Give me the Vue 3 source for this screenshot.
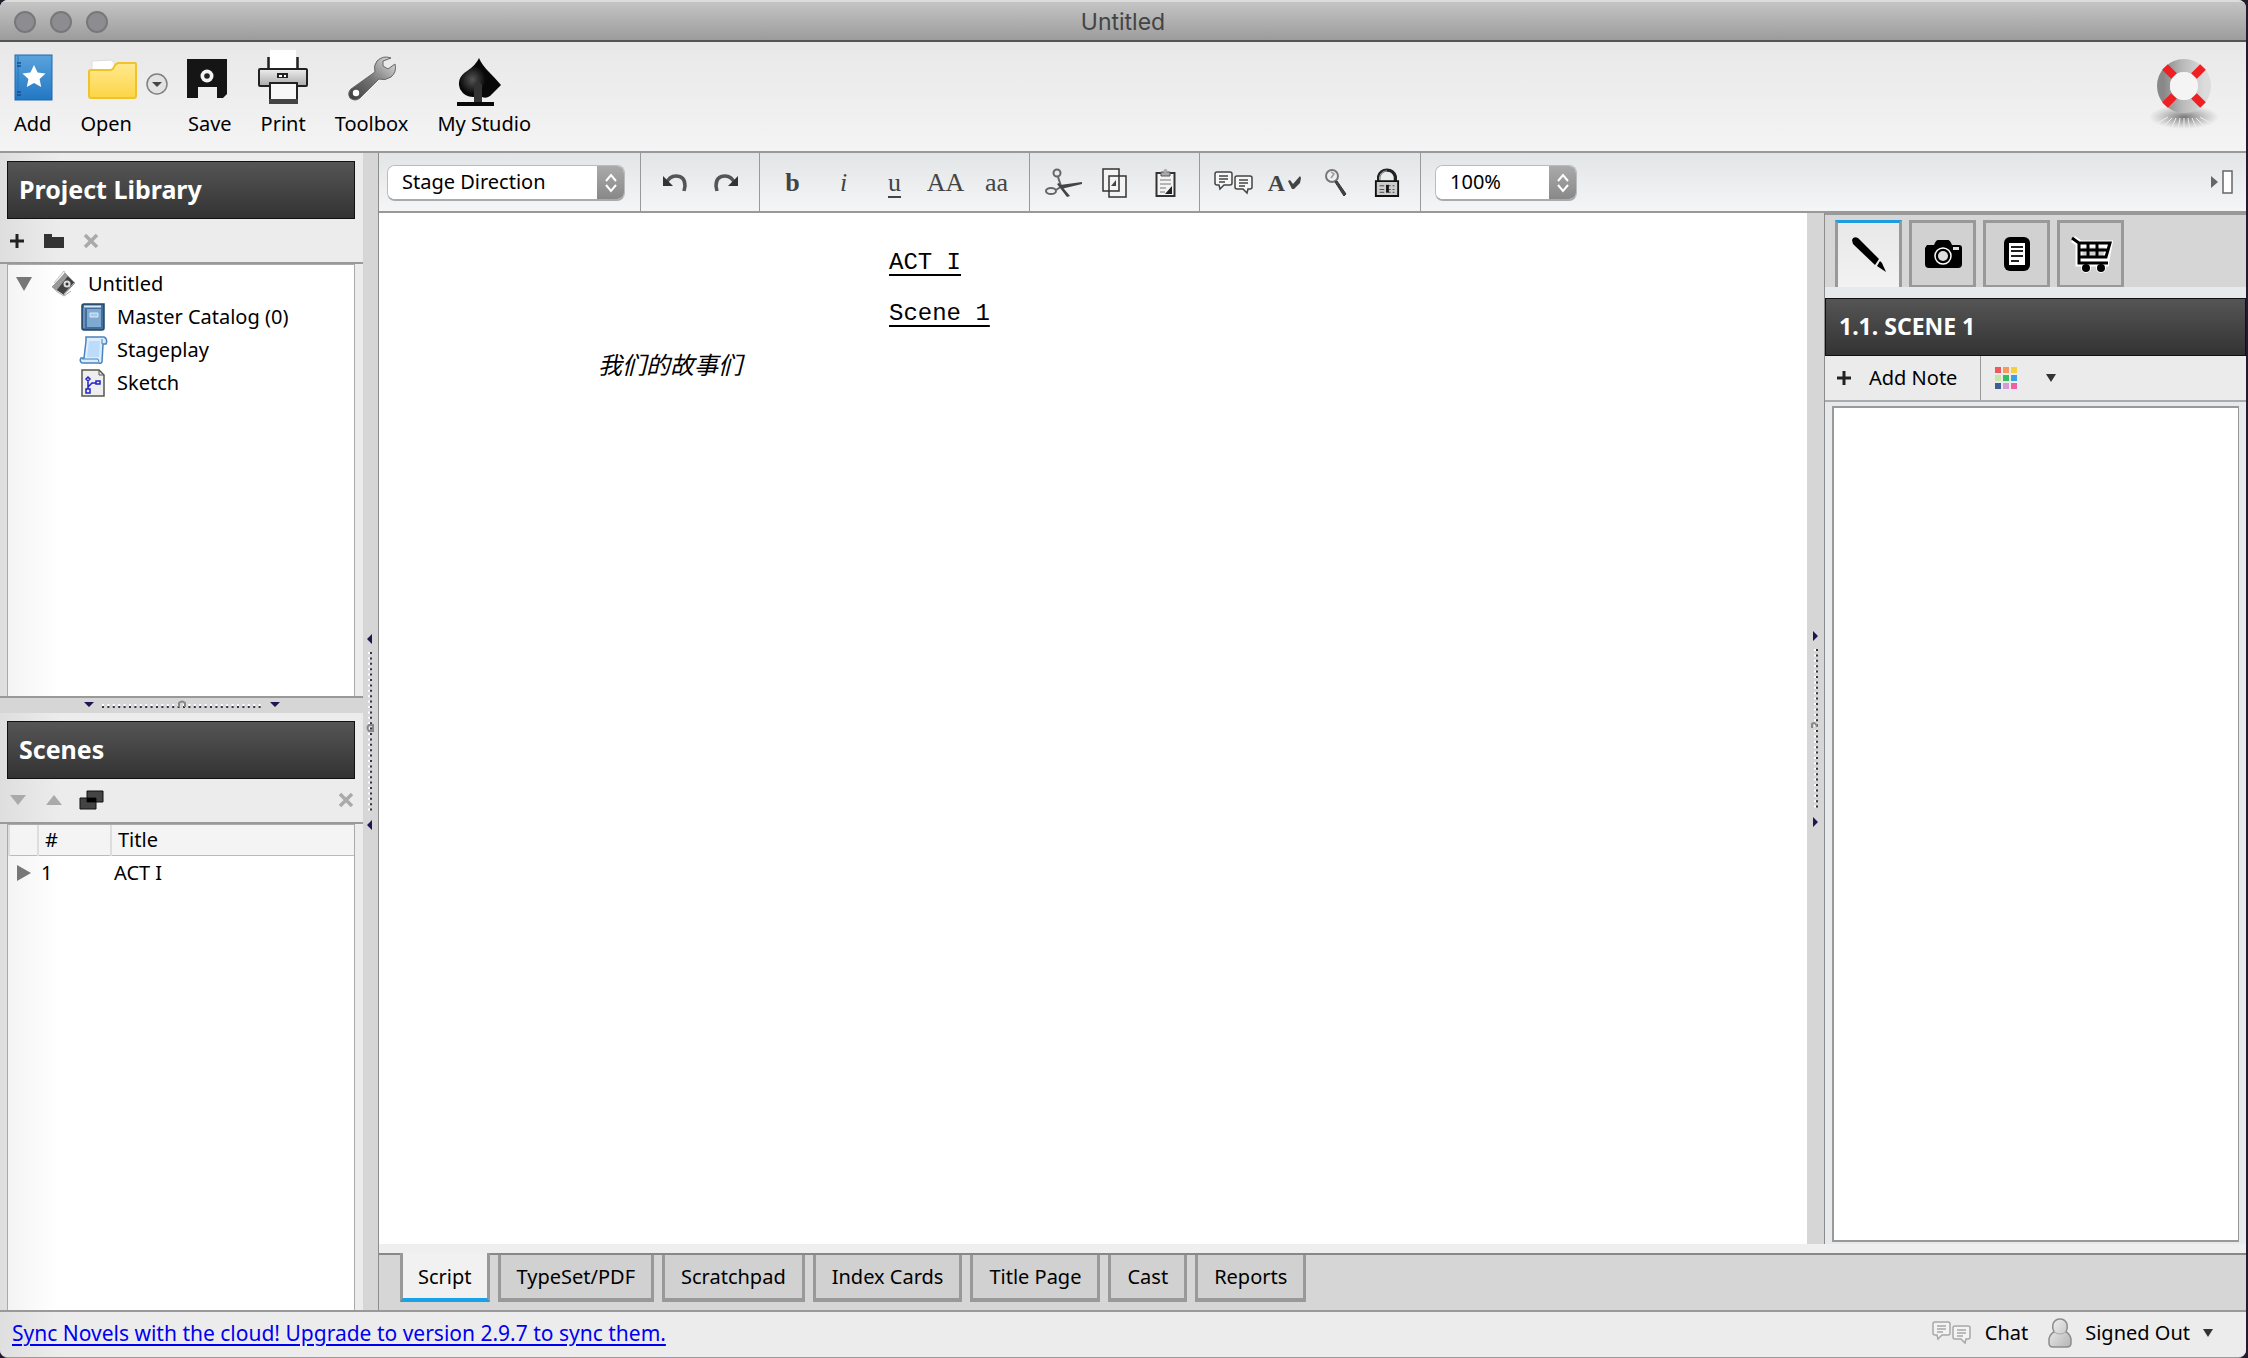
<script setup>
import { ref } from 'vue'

const element = ref('Stage Direction')
const zoom = ref('100%')
const activeTab = ref('Script')
const notes = ref('')

const tabs = ['Script', 'TypeSet/PDF', 'Scratchpad', 'Index Cards', 'Title Page', 'Cast', 'Reports']

const swatches = [
  '#f0595c', '#f59a5b', '#f6cf3f',
  '#c3e8a8', '#36bd5c', '#3a9fe3',
  '#3f5f95', '#d79ad8', '#ee62a5'
]
</script>

<template>
  <div class="window">
    <header class="titlebar">
      <div class="lights"><i></i><i></i><i></i></div>
      <h1>Untitled</h1>
    </header>

    <nav class="toolbar" aria-label="Main">
      <button class="tool">
        <svg viewBox="0 0 56 56" width="56" height="56">
          <defs><linearGradient id="gAdd" x2="0" y2="1"><stop offset="0" stop-color="#5aa3dc" /><stop offset="1" stop-color="#2277c4" /></linearGradient></defs>
          <rect x="10" y="4" width="37" height="45" fill="url(#gAdd)" stroke="#1c69b2" />
          <path d="M13 5v43" stroke="#2a72b8" /><path d="M12 12h4M12 15h4M12 41h4M12 44h4" stroke="#1a4f87" stroke-width="1.500" />
          <path d="M29 14l3.600 7.400 8 1-6 5.600 1.600 8-7.200-4-7.200 4 1.600-8-6-5.600 8-1z" fill="#fff" />
        </svg>
        <span>Add</span>
      </button>
      <div class="open-group">
        <button class="tool">
          <svg viewBox="0 0 56 56" width="56" height="56">
            <defs><linearGradient id="gOpen" x2="0" y2="1"><stop offset="0" stop-color="#ffe98f" /><stop offset="1" stop-color="#fcd545" /></linearGradient></defs>
            <path d="M14 24V10l20-1 5 8z" fill="#fff" stroke="#ddd" />
            <path d="M13 19h19q3 0 4-3t4-4h17q1 0 1 1v32q0 2-2 2H13q-2 0-2-2V21q0-2 2-2z" fill="url(#gOpen)" stroke="#f0c22c" stroke-width="2" />
          </svg>
          <span>Open</span>
        </button>
        <button class="more" aria-label="Open recent">
          <svg viewBox="0 0 22 22" width="22" height="22">
            <circle cx="11" cy="11" r="10" fill="#e2e2e2" stroke="#808080" stroke-width="1.500" /><path d="M6 9h10l-5 5z" fill="#444" />
          </svg>
        </button>
      </div>
      <button class="tool">
        <svg viewBox="0 0 56 56" width="56" height="56">
          <path d="M5 8h40v35l-4 4H5z" fill="#151515" />
          <circle cx="25" cy="25" r="6.500" fill="#f4f4f4" /><circle cx="25" cy="25" r="2.800" fill="#222" />
          <path d="M16 36h19v11H16z" fill="#eee" />
        </svg>
        <span>Save</span>
      </button>
      <button class="tool">
        <svg viewBox="0 0 56 56" width="56" height="56">
          <defs><linearGradient id="gPrint" x2="0" y2="1"><stop offset="0" stop-color="#eee" /><stop offset="1" stop-color="#aaa" /></linearGradient></defs>
          <path d="M15-1h26v20H15z" fill="#fff" /><path d="M13.500 6v13M42.500 6v13" stroke="#222" stroke-width="2.500" />
          <rect x="4" y="18" width="48" height="17" rx="1" fill="url(#gPrint)" stroke="#222" stroke-width="2" />
          <path d="M22 22h11v5H22z" fill="#222" /><path d="M24 24h3v2h-3zM29 24h2v2h-2z" fill="#fff" />
          <path d="M15 32h27v19H15z" fill="#f7f7f7" stroke="#222" stroke-width="2" /><path d="M14 48h29v5H14z" fill="#444" />
        </svg>
        <span>Print</span>
      </button>
      <button class="tool">
        <svg viewBox="0 0 56 56" width="56" height="56">
          <defs><linearGradient id="gWrench" x1="0" y1="1" x2="1" y2="0"><stop offset="0" stop-color="#3c3c3c" /><stop offset=".5" stop-color="#777" /><stop offset="1" stop-color="#e6e6e6" /></linearGradient></defs>
          <path d="M47 7q-8-3-14 3-4 5-2 11L7 38q-4 4-1 9 5 4 10 0l19-19q6 2 12-2 6-5 4-13l-7 5-5-3v-5z" fill="url(#gWrench)" stroke="#666" />
          <circle cx="12" cy="42" r="3.200" fill="#fff" />
        </svg>
        <span>Toolbox</span>
      </button>
      <button class="tool">
        <svg viewBox="0 0 56 56" width="56" height="56">
          <defs><radialGradient id="gSpade" cx=".35" cy=".45"><stop offset="0" stop-color="#555" /><stop offset=".6" stop-color="#080808" /></radialGradient></defs>
          <path d="M23 7q3 7 10 14 6 6 12 13l-11 11q-4 3-8 1v5h12v4H1v-4h18v-5q-10 1-15-8-4-11 7-18 9-6 12-13z" fill="url(#gSpade)" />
          <path d="M18 34q4-7 8 0v17h-8z" fill="#333" />
        </svg>
        <span>My Studio</span>
      </button>
      <button class="help" aria-label="Help">
        <svg viewBox="0 0 70 76" width="70" height="76">
          <defs>
            <linearGradient id="gRing" x2="1" y2="0"><stop offset="0" stop-color="#888" /><stop offset=".45" stop-color="#b8b8b8" /><stop offset="1" stop-color="#dcdcdc" /></linearGradient>
            <radialGradient id="gShade"><stop offset="0" stop-color="#777" /><stop offset="1" stop-color="#999" stop-opacity="0" /></radialGradient>
          </defs>
          <ellipse cx="35" cy="61" rx="35" ry="12" fill="url(#gShade)" />
          <path d="M35 62v13M31 62l-2 12M39 62l2 12M27 62l-5 11M43 62l5 11M23 62l-9 9M47 62l9 9M19 61L7 68M51 61l12 7" stroke="#eee" />
          <circle cx="35" cy="30" r="20.500" fill="none" stroke="url(#gRing)" stroke-width="13" />
          <circle cx="35" cy="30" r="14" fill="#f4f4f4" />
          <g stroke="#f01f22" stroke-width="8"><path d="M16 11l9 9M54 11l-9 9M16 49l9-9M54 49l-9-9" /></g>
        </svg>
      </button>
    </nav>

    <div class="workspace">
      <aside class="left">
        <section class="library">
          <h2 class="dark">Project Library</h2>
          <div class="mini">
            <button aria-label="Add item"><svg viewBox="0 0 14 14" width="14" height="14"><path d="M7 0v14M0 7h14" stroke="#222" stroke-width="3" /></svg></button>
            <button aria-label="New folder"><svg viewBox="0 0 20 14" width="20" height="14"><path d="M0 0h8v3h12v11H0z" fill="#333" /></svg></button>
            <button aria-label="Remove item"><svg viewBox="0 0 14 14" width="14" height="14"><path d="M1 1l12 12M13 1L1 13" stroke="#aaa" stroke-width="3.500" /></svg></button>
          </div>
          <ul class="tree">
            <li class="root">
              <svg viewBox="0 0 16 14" width="16" height="14"><path d="M0 0h16L8 14z" fill="#777" /></svg>
              <svg class="project" viewBox="0 0 24 26" width="24" height="26"><path d="M0 16L13 2l10 10-11 12z" fill="#444" /><path d="M0 16L13 2l3 3L4 20z" fill="#999" /><path d="M2 12L12 0l1 2M22 12l-10 11" stroke="#bbb" fill="none" /><circle cx="15" cy="13" r="3.500" fill="#ddd" /><circle cx="15" cy="13" r="1.500" fill="#333" /><path d="M4 20l8 5 7-5" stroke="#aaa" fill="none" /></svg>
              <span>Untitled</span>
            </li>
            <li>
              <svg viewBox="0 0 24 28" width="24" height="28"><path d="M1 3q0-2 2-2h20v24q0 2-2 2H3q-2 0-2-2z" fill="#426f9d" stroke="#234667" stroke-width="1.500" /><path d="M3 3.500h17" stroke="#dce9f5" stroke-width="2" /><path d="M6 6h14v18H6z" fill="#7fa9d1" /><path d="M3 5v20" stroke="#8fb4d8" /><path d="M9 10h8v4H9z" fill="#a8c8e6" stroke="#dcebf8" /></svg>
              <span>Master Catalog (0)</span>
            </li>
            <li>
              <svg viewBox="0 0 24 28" width="24" height="28"><path d="M5 1h18q4 2 2 7h-3l-1 18q-1 2-3 1H1q-3-2-1-5h3L5 5z" fill="#dcedff" stroke="#4a83bd" stroke-width="1.500" /><path d="M8 5h11l-1 16H6z" fill="#bcdcfb" /><path d="M1 23h16l1 3M21 8V3" stroke="#4a83bd" fill="none" /></svg>
              <span>Stageplay</span>
            </li>
            <li>
              <svg viewBox="0 0 24 28" width="24" height="28"><path d="M1 1h17l5 5v21H1z" fill="#eee" stroke="#555a4c" stroke-width="1.500" /><path d="M18 1v5h5" fill="none" stroke="#555a4c" /><path d="M7 8l2 2-2 2-2-2zM5 20h4v4H5zM15 12h4v3h-4zM7 12v8M7 18l4-4h4" fill="none" stroke="#2222c8" stroke-width="1.500" /></svg>
              <span>Sketch</span>
            </li>
          </ul>
        </section>

        <div class="split-h">
          <svg viewBox="0 0 196 10" width="196" height="10">
            <path d="M0 2h10L5 7zM186 2h10l-5 5z" fill="#1d1650" />
            <path d="M18 5h162" stroke="#fff" stroke-width="2" stroke-dasharray="2 3.4" /><path d="M18 7h162" stroke="#334" stroke-width="2" stroke-dasharray="2 3.4" />
            <path d="M95 7V3q3-3 6 0v4" fill="none" stroke="#888" stroke-width="2" />
          </svg>
        </div>

        <section class="scenes">
          <h2 class="dark">Scenes</h2>
          <div class="mini">
            <button aria-label="Move down"><svg viewBox="0 0 16 10" width="16" height="10"><path d="M0 0h16l-8 10z" fill="#aaa" /></svg></button>
            <button aria-label="Move up"><svg viewBox="0 0 16 10" width="16" height="10"><path d="M0 10h16L8 0z" fill="#aaa" /></svg></button>
            <button aria-label="Group scenes"><svg viewBox="0 0 20 20" width="20" height="20"><path d="M5 1h16v11H5zM-2 8h16v11H-2z" fill="#444" stroke="#111" /><path d="M5 8h9v4H5z" fill="#000" /></svg></button>
            <button class="end" aria-label="Remove scene"><svg viewBox="0 0 14 14" width="14" height="14"><path d="M1 1l12 12M13 1L1 13" stroke="#aaa" stroke-width="3.500" /></svg></button>
          </div>
          <div class="table-box">
            <table>
              <thead><tr><th class="c-arrow"></th><th class="c-num">#</th><th>Title</th></tr></thead>
              <tbody><tr><td class="c-arrow"><svg viewBox="0 0 14 16" width="14" height="16"><path d="M0 0v16l14-8z" fill="#777" /></svg></td><td>1</td><td>ACT I</td></tr></tbody>
            </table>
          </div>
        </section>
      </aside>

      <div class="split-v first">
        <svg viewBox="0 0 10 196" width="10" height="196">
          <path d="M7 0v10L2 5zM7 186v10l-5-5z" fill="#1d1650" />
          <path d="M4 18v162" stroke="#fff" stroke-width="2" stroke-dasharray="2 3.4" /><path d="M6 18v162" stroke="#334" stroke-width="2" stroke-dasharray="2 3.4" />
          <path d="M8 91H4q-3 3 0 6h4z" fill="none" stroke="#888" stroke-width="2" />
        </svg>
      </div>

      <div class="center">
        <div class="format">
          <div class="group pick">
            <label class="combo wide"><select v-model="element" aria-label="Element type"><option>Stage Direction</option></select>
              <i><svg viewBox="0 0 12 20" width="12" height="20"><path d="M1 8l5-6 5 6M1 12l5 6 5-6" fill="none" stroke="#fff" stroke-width="2" /></svg></i></label>
          </div>
          <div class="group">
            <button aria-label="Undo"><svg viewBox="0 0 26 20" width="26" height="20"><path d="M4 11Q7 3 14 3q9 0 9 10l-1 5" fill="none" stroke="#555" stroke-width="3.500" /><path d="M1 3v10h10z" fill="#333" /></svg></button>
            <button aria-label="Redo"><svg viewBox="0 0 26 20" width="26" height="20"><path d="M22 11Q19 3 12 3q-9 0-9 10l1 5" fill="none" stroke="#555" stroke-width="3.500" /><path d="M25 3v10H15z" fill="#333" /></svg></button>
          </div>
          <div class="group letters">
            <button class="b">b</button><button class="it">i</button><button class="u">u</button><button>AA</button><button>aa</button>
          </div>
          <div class="group">
            <button aria-label="Cut"><svg viewBox="0 0 38 30" width="38" height="30"><g fill="none" stroke="#666" stroke-width="2"><circle cx="12" cy="5" r="3.500" /><ellipse cx="6" cy="23" rx="5" ry="3" /><path d="M13 9l3 9M11 22l6-4" /></g><path d="M15 17l22-3v2l-21 5zM14 15l11 13-3 1-10-13z" fill="#444" /></svg></button>
            <button aria-label="Copy"><svg viewBox="0 0 26 30" width="26" height="30"><path d="M1 1h16v22H1zM7 8h17v21H7z" fill="#f4f4f4" stroke="#333" stroke-width="1.500" /><path d="M14 12v6h-5z" fill="#444" /></svg></button>
            <button aria-label="Paste"><svg viewBox="0 0 22 30" width="22" height="30"><path d="M1.500 5h18v23h-18z" fill="#f4f4f4" stroke="#333" stroke-width="2" /><path d="M6 4h9v4H6z" fill="#aaa" stroke="#555" /><circle cx="10.500" cy="3" r="2" fill="#aaa" /><path d="M5 12h11M5 16h11M5 20h6M5 24h5" stroke="#777" /><path d="M17 18v8h-7z" fill="#222" /></svg></button>
          </div>
          <div class="group">
            <button aria-label="Comments"><svg viewBox="0 0 40 26" width="40" height="26"><g fill="#f6f6f6" stroke="#444" stroke-width="1.500"><path d="M3 2h13q2 0 2 2v9q0 2-2 2h-6l-4 4-1-4H3q-2 0-2-2V4q0-2 2-2z" /><path d="M23 6h13q2 0 2 2v9q0 2-2 2h-2l-1 4-4-4h-6q-2 0-2-2V8q0-2 2-2z" /><path d="M5 6h9M5 9h9M5 12h6M25 10h9M25 13h9M25 16h6" /></g></svg></button>
            <button class="spell" aria-label="Spelling">A<svg viewBox="0 0 13 14" width="13" height="14"><path d="M0 5l2-1 3 4 7-8 1 2-1 5-6 6H4z" fill="#444" /></svg></button>
            <button aria-label="Find"><svg viewBox="0 0 24 30" width="24" height="30"><circle cx="8" cy="8" r="6" fill="#eee" stroke="#777" stroke-width="2" /><path d="M7 4l3 2-3 4" fill="none" stroke="#999" stroke-width="1.500" /><path d="M11 14l2-1 9 13-2 2z" fill="#444" stroke="#333" /></svg></button>
            <button aria-label="Lock"><svg viewBox="0 0 28 32" width="26" height="30"><path d="M5 15V9q2-7 9-7t9 7v6" fill="none" stroke="#222" stroke-width="3.500" /><path d="M6 14V9q2-6 8-6" fill="none" stroke="#bbb" /><path d="M2 14h24v16H2z" fill="#ccc" stroke="#111" stroke-width="2" /><path d="M6 19h16M6 23h16M6 26h16" stroke="#444" stroke-dasharray="5 2" /><path d="M13 18h3v8h-3z" fill="#111" /></svg></button>
          </div>
          <div class="group pick last">
            <label class="combo"><select v-model="zoom" aria-label="Zoom"><option>100%</option></select>
              <i><svg viewBox="0 0 12 20" width="12" height="20"><path d="M1 8l5-6 5 6M1 12l5 6 5-6" fill="none" stroke="#fff" stroke-width="2" /></svg></i></label>
          </div>
          <button class="toggle" aria-label="Toggle side panel"><svg viewBox="0 0 24 24" width="24" height="24"><path d="M1 6v12l7-6z" fill="#666" /><path d="M13 1h9v22h-9z" fill="#fff" stroke="#666" stroke-width="1.500" /></svg></button>
        </div>

        <div class="stage">
          <main class="script">
            <p class="heading">ACT I</p>
            <p class="heading">Scene 1</p>
            <p class="direction">我们的故事们</p>
          </main>

          <div class="split-v second">
            <svg viewBox="0 0 10 196" width="10" height="196">
              <path d="M3 0v10l5-5zM3 186v10l5-5z" fill="#1d1650" />
              <path d="M5 18v162" stroke="#fff" stroke-width="2" stroke-dasharray="2 3.4" /><path d="M7 18v162" stroke="#334" stroke-width="2" stroke-dasharray="2 3.4" />
              <path d="M2 97v-4q3-3 5 3" fill="none" stroke="#888" stroke-width="2" />
            </svg>
          </div>

          <aside class="inspector">
            <div class="itabs">
              <button class="on" aria-label="Notes"><svg viewBox="0 0 36 36" width="36" height="36"><path d="M1 3q1-4 6-2l21 21-4 6L2 7z" fill="#000" /><path d="M26 29l3-5 2 2 4 9z" fill="#000" /></svg></button>
              <button aria-label="Media"><svg viewBox="0 0 38 30" width="38" height="30"><path d="M3 6h7q2-5 4-5h10q2 0 4 5h7q3 0 3 3v16q0 4-4 4H5q-4 0-4-4V9z" fill="#000" /><circle cx="19" cy="17" r="8" fill="none" stroke="#fff" stroke-width="1.500" /><circle cx="19" cy="17" r="5" fill="#ddd" /><path d="M29 8h6v3h-6z" fill="#ddd" /></svg></button>
              <button aria-label="Document"><svg viewBox="0 0 28 36" width="28" height="36"><rect x="1" y="1" width="26" height="34" rx="6" fill="#000" /><path d="M6 7h16v22H6z" fill="#fff" /><path d="M8 11h12M8 15h12M8 20h12M8 25h8" stroke="#222" stroke-width="2" /></svg></button>
              <button aria-label="Store"><svg viewBox="0 0 42 38" width="42" height="38"><g fill="none" stroke="#fff" stroke-width="7"><path d="M3 4l6 4v20h30M9 9h30l-3 16H9" /></g><g fill="#fff"><circle cx="16" cy="33" r="5" /><circle cx="31" cy="33" r="5" /></g><g fill="none" stroke="#000" stroke-width="3"><path d="M2 3l7 5v20h29M9 8h31l-4 14H9M9 15h29M18 8v14M27 8v14" /></g><circle cx="16" cy="33" r="4" /><circle cx="31" cy="33" r="4" /></svg></button>
            </div>
            <h2 class="dark">1.1. SCENE 1</h2>
            <div class="notebar">
              <button class="add"><svg viewBox="0 0 14 14" width="14" height="14"><path d="M7 0v14M0 7h14" stroke="#222" stroke-width="3" /></svg><span>Add Note</span></button>
              <button class="palette" aria-label="Note colour">
                <span class="grid"><i v-for="c in swatches" :key="c" :style="{ background: c }"></i></span>
                <svg viewBox="0 0 10 8" width="10" height="8"><path d="M0 0h10L5 8z" fill="#333" /></svg>
              </button>
            </div>
            <textarea v-model="notes" aria-label="Note text"></textarea>
          </aside>
        </div>

        <nav class="tabs" aria-label="Views">
          <button v-for="t in tabs" :key="t" :class="{ on: t === activeTab }" @click="activeTab = t">{{ t }}</button>
        </nav>
      </div>
    </div>

    <footer>
      <a href="#">Sync Novels with the cloud! Upgrade to version 2.9.7 to sync them.</a>
      <div class="status">
        <button><svg viewBox="0 0 40 26" width="40" height="26"><g fill="#f3f3f3" stroke="#a8a8a8" stroke-width="1.500"><path d="M3 2h13q2 0 2 2v9q0 2-2 2h-6l-4 4-1-4H3q-2 0-2-2V4q0-2 2-2z" /><path d="M23 6h13q2 0 2 2v9q0 2-2 2h-2l-1 4-4-4h-6q-2 0-2-2V8q0-2 2-2z" /><path d="M5 6h9M5 9h9M5 12h6M25 10h9M25 13h9M25 16h6" /></g></svg><span>Chat</span></button>
        <button><svg viewBox="0 0 24 30" width="24" height="30"><defs><linearGradient id="gUser" x2="1" y2="1"><stop offset="0" stop-color="#f4f4f4" /><stop offset="1" stop-color="#b4b4b4" /></linearGradient></defs><path d="M5 29q-4 0-4-4v-4q1-5 5-7-2-4-1-8 2-5 7-5t7 5q1 4-1 8 4 2 5 7v4q0 4-4 4z" fill="url(#gUser)" stroke="#8c8c8c" stroke-width="1.500" /><path d="M6 14q6 4 12 0" fill="none" stroke="#aaa" /></svg><span>Signed Out</span><svg viewBox="0 0 10 8" width="10" height="8"><path d="M0 0h10L5 8z" fill="#333" /></svg></button>
      </div>
    </footer>
  </div>
</template>

<style>
body { margin: 0; background: #231a2c; }
</style>

<style scoped>
* { box-sizing: border-box; }
.window {
  height: 100vh;
  margin-right: 2px;
  display: flex;
  flex-direction: column;
  overflow: hidden;
  background: #ececec;
  border-bottom: 1px solid #9a9a9a;
  border-radius: 8px;
  font: 20px/24px "Noto Sans", "Open Sans", sans-serif;
  color: #000;
}
button { border: 0; padding: 0; background: none; font: inherit; color: inherit; }
svg { display: block; flex: none; overflow: visible; }
h1, h2, p, ul { margin: 0; padding: 0; }

.titlebar {
  flex: none;
  height: 42px;
  display: grid;
  grid-template-columns: 1fr auto 1fr;
  align-items: center;
  padding: 1px 14px 0;
  background: linear-gradient(#c4c4c4, #9c9c9c);
  border-top: 2px solid #dcdcdc;
  border-bottom: 2px solid #555;
}
.lights { display: flex; gap: 14px; }
.lights i { width: 22px; height: 22px; border-radius: 50%; background: #8d8d91; border: 2px solid #78787b; }
.titlebar h1 { font: 23px/28px Inter, sans-serif; color: #444; }

.toolbar {
  flex: none;
  height: 111px;
  display: flex;
  align-items: flex-start;
  gap: 29px;
  padding: 9px 27px 0 14px;
  background: linear-gradient(#e8e8e8, #f4f4f4);
  border-bottom: 2px solid #999;
}
.tool { display: flex; flex-direction: column; align-items: center; gap: 5px; }
.tool svg { margin: 0 -20px; }
.open-group { display: flex; gap: 14px; margin-right: -9px; }
.more { align-self: flex-start; padding-top: 22px; }
.help { margin-left: auto; padding-top: 5px; }

.workspace { flex: 1; min-height: 0; display: flex; }

.left { width: 363px; flex: none; display: flex; flex-direction: column; background: linear-gradient(90deg, #dedede, #ececec 60px); }
.library { flex: 544; display: flex; flex-direction: column; min-height: 0; padding-top: 8px; border-bottom: 2px solid #999; }
.scenes { flex: 599; display: flex; flex-direction: column; min-height: 0; padding-top: 8px; }
.dark {
  flex: none;
  height: 58px;
  margin: 0 8px 0 7px;
  padding-left: 11px;
  border: 1px solid #111;
  background: linear-gradient(#555, #333);
  color: #fff;
  font-size: 25px;
  line-height: 54px;
}
.mini { flex: none; height: 45px; display: flex; align-items: center; gap: 20px; padding: 0 10px; border-bottom: 2px solid #999; }
.mini .end { margin-left: auto; }
.tree { flex: 1; margin: 0 8px 0 7px; padding-top: 2px; border: 1px solid #aaa; border-width: 1px 1px 0; background: linear-gradient(90deg, #f4f4f4, #fff 50px); list-style: none; }
.tree li { height: 33px; display: flex; align-items: center; gap: 12px; padding-left: 73px; }
.tree .root { padding-left: 8px; }
.tree .project { margin-left: 8px; }

.split-h { flex: none; height: 15px; display: flex; align-items: center; justify-content: center; background: #d6d6d6; }
.split-v { flex: none; display: flex; align-items: center; background: #d6d6d6; border-right: 1px solid #8c8c8c; }
.split-v.first { width: 16px; padding-left: 2px; }
.split-v.second { width: 18px; padding-left: 3px; }

.table-box { flex: 1; margin: 0 8px 0 7px; border: 1px solid #aaa; border-bottom: 0; background: linear-gradient(90deg, #f4f4f4, #fff 50px); }
table { width: 100%; border-collapse: collapse; table-layout: fixed; }
th { height: 31px; padding: 0 0 0 6px; font-weight: 400; text-align: left; background: #f4f4f4; border-bottom: 1px solid #bbb; border-left: 2px solid #ddd; }
td { height: 34px; padding: 0 0 0 3px; }
.c-arrow { width: 29px; }
.c-num { width: 73px; }
td.c-arrow { padding-left: 8px; }

.center { flex: 1; min-width: 0; display: flex; flex-direction: column; background: #efefef; }
.format { flex: none; height: 60px; display: flex; background: linear-gradient(#e2e5e6, #f4f5f7); border-bottom: 2px solid #999; }
.group { display: flex; align-items: center; padding: 2px 8px 0; border-right: 1px solid #999; }
.group button { width: 51px; height: 40px; display: flex; align-items: center; justify-content: center; }
.group.letters { padding: 2px 7px 0; }
.letters button { font: 26px/30px "Liberation Serif", serif; color: #444; }
.letters .b { font-weight: 700; }
.letters .it { font-style: italic; }
.letters .u { text-decoration: underline; text-underline-offset: 5px; }
.group .spell { gap: 3px; font: 700 24px/24px "Liberation Serif", serif; color: #444; }
.group.pick { padding: 2px 15px 0 8px; }
.group.last { padding-left: 14px; border: 0; }
.combo { display: flex; width: 142px; height: 36px; border: 1px solid #bbb; border-bottom: 2px solid #aaa; border-radius: 8px; overflow: hidden; background: #fff; }
.combo.wide { width: 238px; }
.combo select { flex: 1; min-width: 0; appearance: none; border: 0; padding: 0 0 2px 14px; background: #fff; font: inherit; color: #000; }
.combo i { width: 27px; display: flex; align-items: center; justify-content: center; background: linear-gradient(#aaa, #888); }
.toggle { margin-left: auto; padding-right: 12px; }

.stage { flex: 1; min-height: 0; display: flex; }
.script { flex: 1; min-width: 0; padding: 36px 0 0 219px; background: #fff; font: 24px/27px "Liberation Mono", "Noto Sans CJK SC", monospace; }
.script p { margin-bottom: 24px; }
.script .heading { padding-left: 291px; text-decoration: underline; text-underline-offset: 5px; text-decoration-thickness: 2px; }
.script .direction { padding-top: 3px; font-style: italic; }

.inspector { width: 421px; flex: none; display: flex; flex-direction: column; background: #e6eaec; }
.itabs { flex: none; display: flex; gap: 7px; margin-bottom: 11px; padding: 5px 10px 0; border-top: 2px solid #999; background: #d6d6d6; }
.itabs button { width: 67px; height: 67px; display: flex; align-items: center; justify-content: center; background: #d1d1d1; border: 3px solid #999; border-bottom-width: 2px; }
.itabs .on { background: linear-gradient(#e8e8e8, #f2f2f2); border-top-color: #1f9be0; border-bottom: 0; }
.inspector .dark { margin: 0; padding-left: 13px; font-size: 23px; }
.notebar { flex: none; height: 46px; display: flex; background: #ebebeb; border-bottom: 2px solid #aaa; }
.notebar button { display: flex; align-items: center; padding-bottom: 1px; }
.notebar .add { gap: 18px; padding: 0 23px 1px 12px; border-right: 1px solid #999; }
.notebar .palette { gap: 29px; padding-left: 14px; }
.grid { display: grid; grid-template-columns: repeat(3, 6px); gap: 2px; }
.grid i { height: 6px; }
textarea { flex: 1; margin: 4px 7px 2px; border: 2px solid #999; border-right-width: 1px; background: #fff; resize: none; font: inherit; }

.tabs { flex: none; height: 57px; display: flex; align-items: flex-start; gap: 8px; margin-top: 9px; padding-left: 21px; background: #d6d6d6; border-top: 2px solid #888; }
.tabs button { height: 47px; padding: 0 16px; background: #d1d1d1; border: 3px solid #999; border-top: 0; border-bottom-width: 4px; }
.tabs .on { height: 49px; margin-top: -2px; padding: 2px 15px 0; background: #f1f1f1; border-bottom-color: #1da1e6; }

footer { flex: none; height: 47px; display: flex; align-items: center; justify-content: space-between; padding: 0 33px 3px 12px; border-top: 2px solid #999; background: linear-gradient(90deg, #dfdfdf, #ececec 60px); }
footer a { font-size: 21px; color: #0000f0; text-underline-offset: 3px; }
.status { display: flex; gap: 20px; }
.status button { display: flex; align-items: center; gap: 13px; }
</style>
